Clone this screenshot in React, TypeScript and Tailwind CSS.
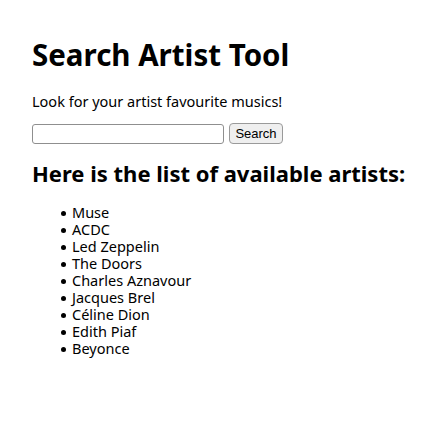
import React from "react";

const artists = ["Muse", "ACDC", "Led Zeppelin", "The Doors", "Charles Aznavour", "Jacques Brel", "Céline Dion", "Edith Piaf", "Beyonce"];

export default function App() {
  return (
    <div className="min-h-[432px] bg-white text-black px-8 pt-[37px]" style={{ fontFamily: '"Noto Sans", sans-serif' }}>
      <h1 className="text-[29.5px] font-bold leading-[36px]">Search Artist Tool</h1>
      <p className="text-[14.5px] mt-[19px] leading-[18px]">Look for your artist favourite musics!</p>
      <div className="flex items-end gap-[5px] mt-[13px]">
        <input className="w-[192px] h-[20px] border border-[#8f8f8f] rounded-[3px] bg-white" />
        <button className="w-[54px] h-[21px] bg-[#efefef] border border-[#9a9a9a] rounded-[4px] text-[13px] leading-none text-black flex items-center justify-center" style={{ fontFamily: '"Liberation Sans", sans-serif' }}>Search</button>
      </div>
      <h2 className="text-[22px] font-bold mt-[16px] leading-[26px]">Here is the list of available artists:</h2>
      <ul className="pl-[29px] mt-[18px] text-[14.5px] leading-[17px]">
        {artists.map((a) => (
          <li key={a} className="flex items-center gap-[6px]">
            <span className="w-[5px] h-[5px] rounded-full bg-black shrink-0 mt-[1px]" />
            <span>{a}</span>
          </li>
        ))}
      </ul>
    </div>
  );
}
